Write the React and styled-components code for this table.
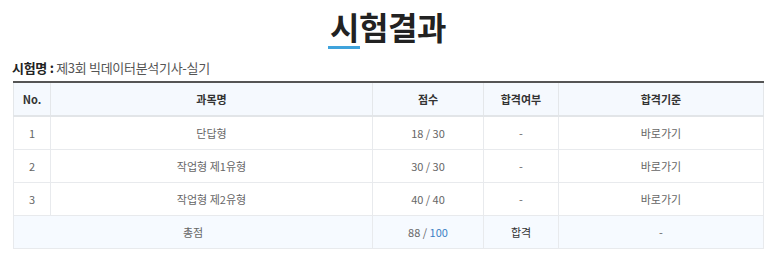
import React from "react";
import styled, { createGlobalStyle } from "styled-components";

const Global = createGlobalStyle`
  html, body { margin: 0; padding: 0; background: #fff; }
  body { font-family: "Noto Sans CJK KR", "Noto Sans", sans-serif; color: #333; }
`;

const Page = styled.div`
  padding: 0 10px 0 13px;
  width: 750px;
`;

const Title = styled.h1`
  margin: 0;
  padding-top: 2px;
  text-align: center;
  font-size: 32px;
  font-weight: 700;
  line-height: 48px;
  color: #222;
  letter-spacing: -0.5px;
`;

const Mark = styled.span`
  position: relative;
  &::after {
    content: "";
    position: absolute;
    left: -2px;
    right: -1px;
    bottom: 0px;
    height: 3px;
    background: #3fa3dc;
  }
`;

const ExamName = styled.div`
  margin-top: 8px;
  margin-left: -1px;
  font-size: 13px;
  line-height: 20px;
  color: #555;
  letter-spacing: -0.3px;
  strong { color: #222; font-weight: 700; }
`;

const Table = styled.table`
  width: 750px;
  margin-top: 3px;
  border-collapse: collapse;
  border-top: 2px solid #555;
  font-size: 11px;
  color: #555;
  table-layout: fixed;
`;

const Th = styled.th`
  height: 32px;
  padding: 0;
  background: #f5f9fe;
  border: 1px solid #e4e7ea;
  border-top: none;
  border-bottom: 2px solid #e2e5e8;
  font-weight: 700;
  color: #333;
  text-align: center;
`;

const Td = styled.td`
  height: 32px;
  padding: 0;
  border: 1px solid #e8eaed;
  text-align: center;
  background: ${(p) => (p.$total ? "#f6faff" : "#fff")};
  color: ${(p) => (p.$strong ? "#333" : "#666")};
`;

const Blue = styled.span`
  color: #3b7fc4;
`;

const rows = [
  { no: 1, name: "단답형", score: "18 / 30" },
  { no: 2, name: "작업형 제1유형", score: "30 / 30" },
  { no: 3, name: "작업형 제2유형", score: "40 / 40" },
];

export default function App() {
  return (
    <>
      <Global />
      <Page>
        <Title>
          <Mark>시</Mark>험결과
        </Title>
        <ExamName>
          <strong>시험명 :</strong> 제3회 빅데이터분석기사-실기
        </ExamName>
        <Table>
          <colgroup>
            <col style={{ width: 37 }} />
            <col style={{ width: 322 }} />
            <col style={{ width: 111 }} />
            <col style={{ width: 75 }} />
            <col style={{ width: 205 }} />
          </colgroup>
          <thead>
            <tr>
              <Th>No.</Th>
              <Th>과목명</Th>
              <Th>점수</Th>
              <Th>합격여부</Th>
              <Th>합격기준</Th>
            </tr>
          </thead>
          <tbody>
            {rows.map((r) => (
              <tr key={r.no}>
                <Td>{r.no}</Td>
                <Td>{r.name}</Td>
                <Td>{r.score}</Td>
                <Td>-</Td>
                <Td>바로가기</Td>
              </tr>
            ))}
            <tr>
              <Td $total colSpan={2}>총점</Td>
              <Td $total>
                88 / <Blue>100</Blue>
              </Td>
              <Td $total $strong>합격</Td>
              <Td $total>-</Td>
            </tr>
          </tbody>
        </Table>
      </Page>
    </>
  );
}
